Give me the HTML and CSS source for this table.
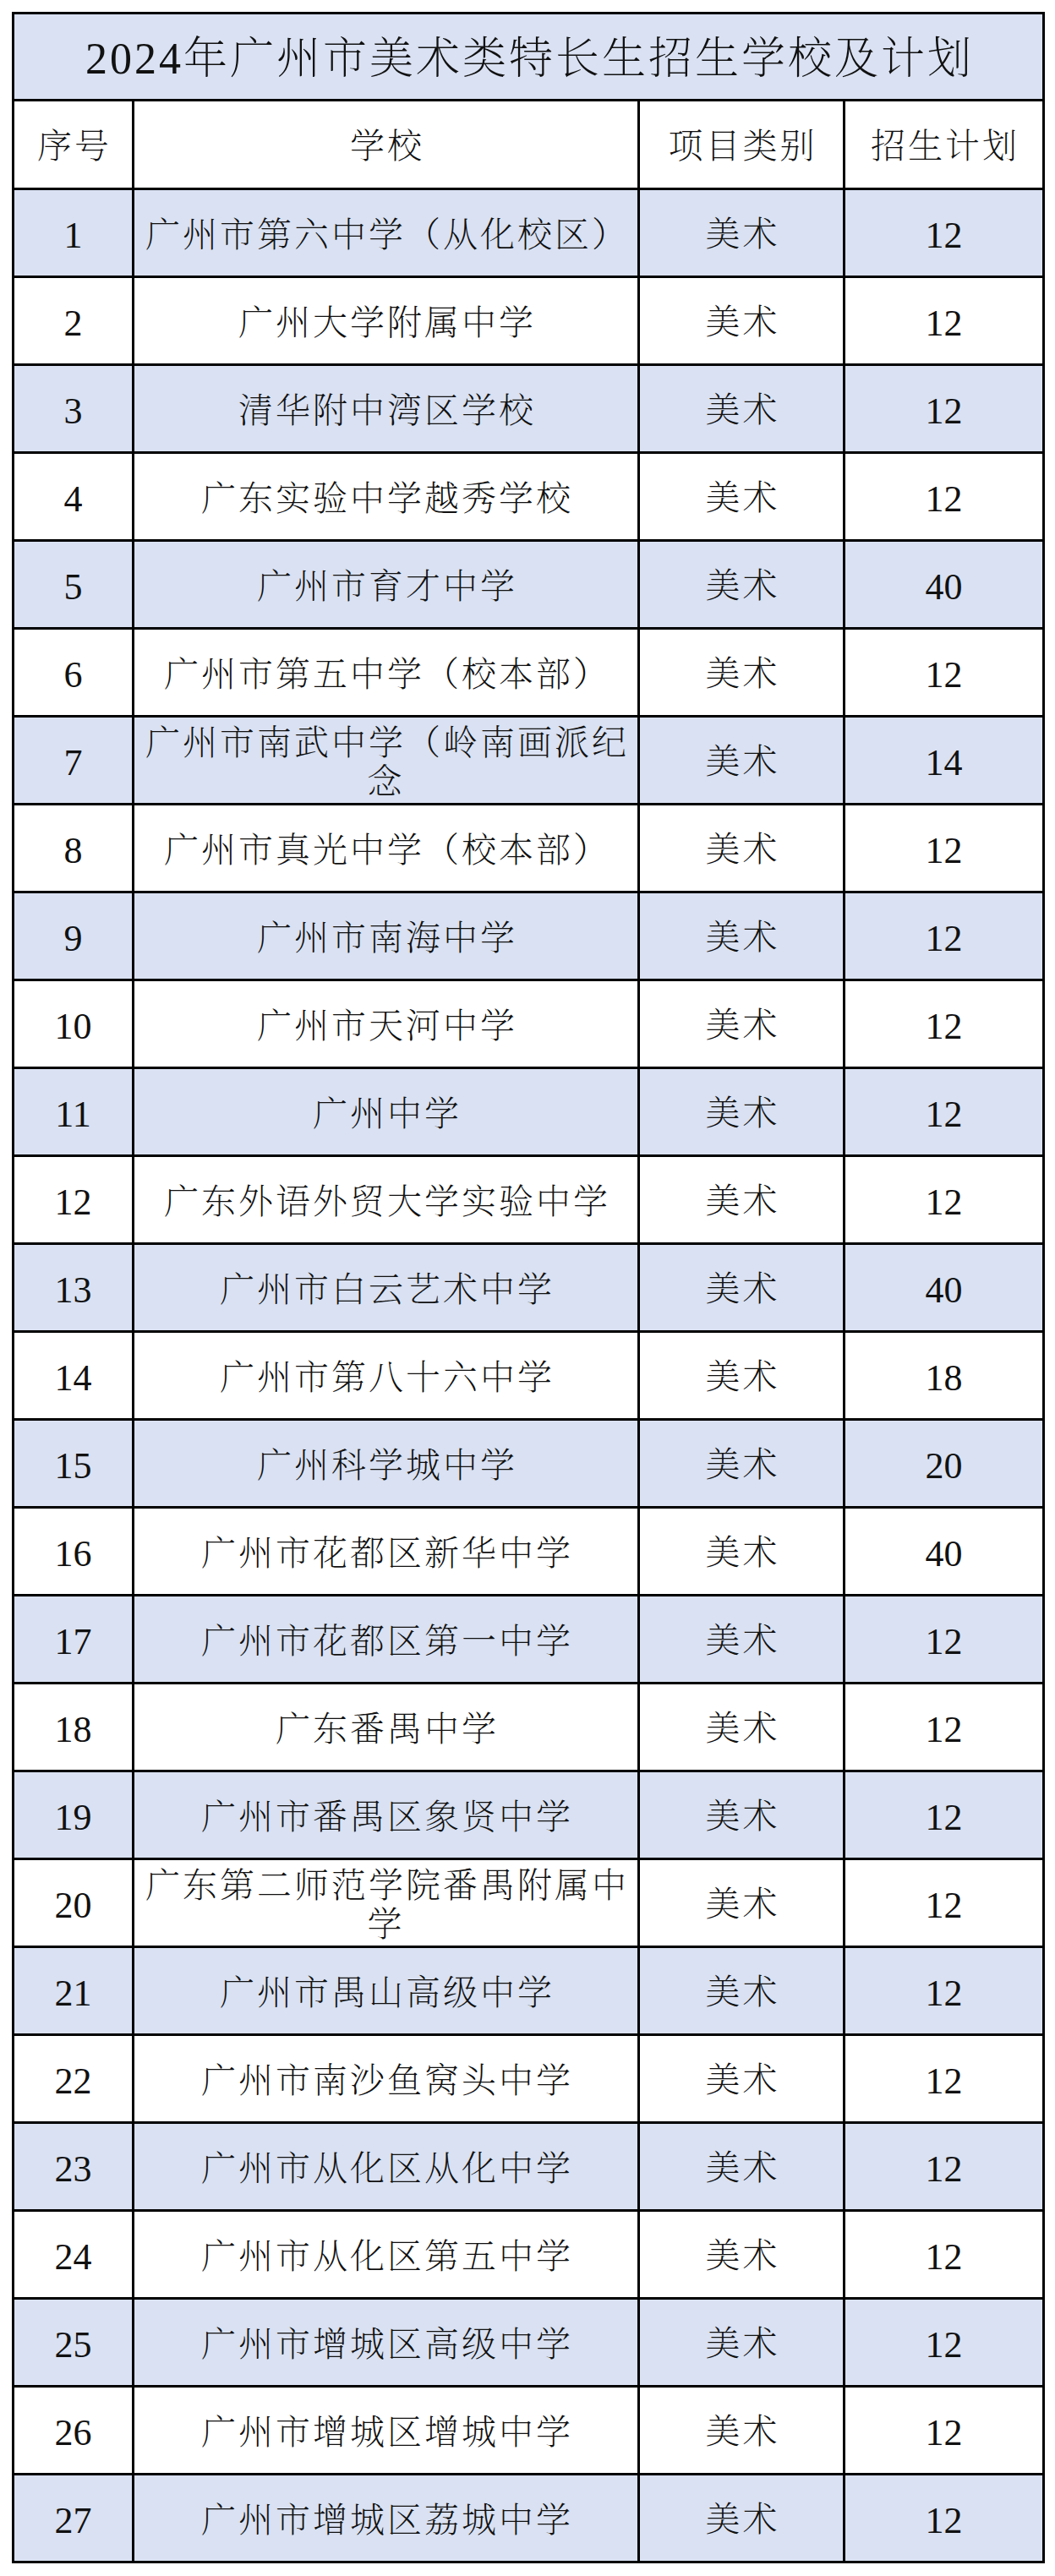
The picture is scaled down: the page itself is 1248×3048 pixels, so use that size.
FILE: index.html
```html
<!DOCTYPE html>
<html lang="zh-CN">
<head>
<meta charset="utf-8">
<title>2024年广州市美术类特长生招生学校及计划</title>
<link rel="stylesheet" href="styles.css">
</head>
<body>
<table class="plan">
  <colgroup>
    <col class="c-no">
    <col class="c-school">
    <col class="c-type">
    <col class="c-count">
  </colgroup>
  <thead>
    <tr class="title-row"><th colspan="4" class="title">2024年广州市美术类特长生招生学校及计划</th></tr>
    <tr class="head-row"><th>序号</th><th>学校</th><th>项目类别</th><th>招生计划</th></tr>
  </thead>
  <tbody>
    <tr class="alt"><td class="num">1</td><td class="school"><div>广州市第六中学（从化校区）</div></td><td>美术</td><td class="num">12</td></tr>
    <tr><td class="num">2</td><td class="school"><div>广州大学附属中学</div></td><td>美术</td><td class="num">12</td></tr>
    <tr class="alt"><td class="num">3</td><td class="school"><div>清华附中湾区学校</div></td><td>美术</td><td class="num">12</td></tr>
    <tr><td class="num">4</td><td class="school"><div>广东实验中学越秀学校</div></td><td>美术</td><td class="num">12</td></tr>
    <tr class="alt"><td class="num">5</td><td class="school"><div>广州市育才中学</div></td><td>美术</td><td class="num">40</td></tr>
    <tr><td class="num">6</td><td class="school"><div>广州市第五中学（校本部）</div></td><td>美术</td><td class="num">12</td></tr>
    <tr class="alt"><td class="num">7</td><td class="school"><div>广州市南武中学（岭南画派纪念</div></td><td>美术</td><td class="num">14</td></tr>
    <tr><td class="num">8</td><td class="school"><div>广州市真光中学（校本部）</div></td><td>美术</td><td class="num">12</td></tr>
    <tr class="alt"><td class="num">9</td><td class="school"><div>广州市南海中学</div></td><td>美术</td><td class="num">12</td></tr>
    <tr><td class="num">10</td><td class="school"><div>广州市天河中学</div></td><td>美术</td><td class="num">12</td></tr>
    <tr class="alt"><td class="num">11</td><td class="school"><div>广州中学</div></td><td>美术</td><td class="num">12</td></tr>
    <tr><td class="num">12</td><td class="school"><div>广东外语外贸大学实验中学</div></td><td>美术</td><td class="num">12</td></tr>
    <tr class="alt"><td class="num">13</td><td class="school"><div>广州市白云艺术中学</div></td><td>美术</td><td class="num">40</td></tr>
    <tr><td class="num">14</td><td class="school"><div>广州市第八十六中学</div></td><td>美术</td><td class="num">18</td></tr>
    <tr class="alt"><td class="num">15</td><td class="school"><div>广州科学城中学</div></td><td>美术</td><td class="num">20</td></tr>
    <tr><td class="num">16</td><td class="school"><div>广州市花都区新华中学</div></td><td>美术</td><td class="num">40</td></tr>
    <tr class="alt"><td class="num">17</td><td class="school"><div>广州市花都区第一中学</div></td><td>美术</td><td class="num">12</td></tr>
    <tr><td class="num">18</td><td class="school"><div>广东番禺中学</div></td><td>美术</td><td class="num">12</td></tr>
    <tr class="alt"><td class="num">19</td><td class="school"><div>广州市番禺区象贤中学</div></td><td>美术</td><td class="num">12</td></tr>
    <tr><td class="num">20</td><td class="school"><div>广东第二师范学院番禺附属中学</div></td><td>美术</td><td class="num">12</td></tr>
    <tr class="alt"><td class="num">21</td><td class="school"><div>广州市禺山高级中学</div></td><td>美术</td><td class="num">12</td></tr>
    <tr><td class="num">22</td><td class="school"><div>广州市南沙鱼窝头中学</div></td><td>美术</td><td class="num">12</td></tr>
    <tr class="alt"><td class="num">23</td><td class="school"><div>广州市从化区从化中学</div></td><td>美术</td><td class="num">12</td></tr>
    <tr><td class="num">24</td><td class="school"><div>广州市从化区第五中学</div></td><td>美术</td><td class="num">12</td></tr>
    <tr class="alt"><td class="num">25</td><td class="school"><div>广州市增城区高级中学</div></td><td>美术</td><td class="num">12</td></tr>
    <tr><td class="num">26</td><td class="school"><div>广州市增城区增城中学</div></td><td>美术</td><td class="num">12</td></tr>
    <tr class="alt"><td class="num">27</td><td class="school"><div>广州市增城区荔城中学</div></td><td>美术</td><td class="num">12</td></tr>
  </tbody>
</table>
</body>
</html>
```
FILE: styles.css
```css
html, body {
  margin: 0;
  padding: 0;
  background: #ffffff;
}

body {
  padding: 14px 0 0 14px;
  font-family: "Liberation Serif", "Noto Serif CJK SC", "Noto Sans CJK SC", serif;
  color: #111111;
}

.plan {
  border-collapse: collapse;
  table-layout: fixed;
  width: 1219px;
}

.c-no { width: 142px; }
.c-school { width: 598px; }
.c-type { width: 243px; }
.c-count { width: 236px; }

.plan th,
.plan td {
  border: 3px solid #000000;
  padding: 5px 0 0 0;
  text-align: center;
  vertical-align: middle;
  font-weight: 200;
  font-size: 41px;
  letter-spacing: 3px;
  text-indent: 3px;
  line-height: 1.25;
}

.title-row { height: 103px; }
.title-row .title {
  background: #d9e1f2;
  font-size: 52px;
  letter-spacing: 3px;
  text-indent: 3px;
}

.head-row { height: 105px; }
.head-row th { background: #ffffff; }

.plan tbody tr { height: 104px; }
.plan tbody tr.alt td { background: #d9e1f2; }

.plan td.num {
  font-size: 44px;
  letter-spacing: 0;
  text-indent: 0;
  font-weight: 400;
}

.school div {
  line-height: 46px;
  padding: 0 6px;
}
```
